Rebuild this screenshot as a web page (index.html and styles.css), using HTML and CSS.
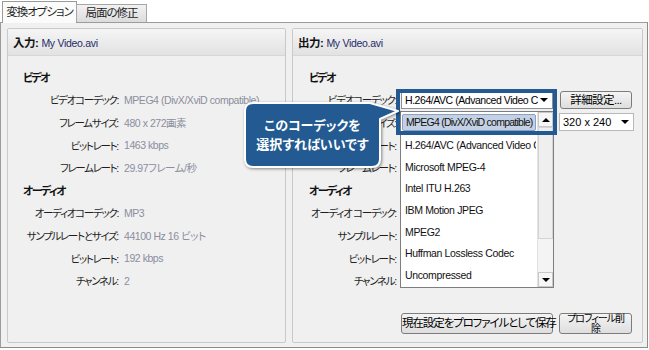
FILE: index.html
```html
<!DOCTYPE html>
<html lang="ja">
<head>
    <meta charset="UTF-8">
    <meta name="viewport" content="width=device-width, initial-scale=1.0">
    <title>変換オプション</title>
    <link rel="stylesheet" href="styles.css">
</head>
<body>
    <div class="tabs">
        <div class="tab active">変換オプション</div>
        <div class="tab">局面の修正</div>
    </div>
    <div class="frame">
        <div class="panel input">
            <div class="panel-head"><b>入力:</b> <span class="file">My Video.avi</span></div>
            <div class="panel-body info">
                <div class="group">ビデオ</div>
                <div class="label">ビデオコーデック:</div><div class="value">MPEG4 (DivX/XviD compatible)</div>
                <div class="label">フレームサイズ:</div><div class="value">480 x 272画素</div>
                <div class="label">ビットレート:</div><div class="value">1463 kbps</div>
                <div class="label">フレームレート:</div><div class="value">29.97フレーム/秒</div>
                <div class="group">オーディオ</div>
                <div class="label">オーディオコーデック:</div><div class="value">MP3</div>
                <div class="label">サンプルレートとサイズ:</div><div class="value">44100 Hz 16 ビット</div>
                <div class="label">ビットレート:</div><div class="value">192 kbps</div>
                <div class="label">チャンネル:</div><div class="value">2</div>
            </div>
        </div>
        <div class="panel output">
            <div class="panel-head"><b>出力:</b> <span class="file">My Video.avi</span></div>
            <div class="panel-body settings">
                <div class="group">ビデオ</div>
                <div class="label">ビデオコーデック:</div>
                <div class="controls">
                    <div class="select wide"><span class="select-text">H.264/AVC (Advanced Video C</span><span class="caret"></span></div>
                    <div class="button detail">詳細設定...</div>
                </div>
                <div class="label">フレームサイズ:</div>
                <div class="controls">
                    <div class="select wide"><span class="select-text">480 x 272</span><span class="caret"></span></div>
                    <div class="select size"><span class="select-text">320 x 240</span><span class="caret"></span></div>
                </div>
                <div class="label">ビットレート:</div><div class="controls"></div>
                <div class="label">フレームレート:</div><div class="controls"></div>
                <div class="group">オーディオ</div>
                <div class="label">オーディオ コーデック:</div><div class="controls"></div>
                <div class="label">サンプルレート:</div><div class="controls"></div>
                <div class="label">ビットレート:</div><div class="controls"></div>
                <div class="label">チャンネル:</div><div class="controls"></div>
            </div>
            <div class="actions">
                <div class="button save">現在設定をプロファイルとして保存</div>
                <div class="button remove">プロフィール削<br>除</div>
            </div>
        </div>

        <!-- open codec dropdown, drawn over the output panel -->
        <div class="codec-list">
            <div class="codec-items">
                <div class="codec current">MPEG4 (DivX/XviD compatible)</div>
                <div class="codec">H.264/AVC (Advanced Video C</div>
                <div class="codec">Microsoft MPEG-4</div>
                <div class="codec">Intel ITU H.263</div>
                <div class="codec">IBM Motion JPEG</div>
                <div class="codec">MPEG2</div>
                <div class="codec">Huffman Lossless Codec</div>
                <div class="codec">Uncompressed</div>
            </div>
            <div class="scrollbar">
                <div class="arrow"><span class="tri up"></span></div>
                <div class="thumb"></div>
                <div class="track"></div>
                <div class="arrow"><span class="tri down"></span></div>
            </div>
        </div>
        <div class="highlight"></div>
        <div class="callout">
            <svg class="bubble" width="162" height="72" viewBox="0 0 162 72">
                <path d="M13 3 H130 L158 11 L140 19 V59 Q140 67 132 67 H13 Q5 67 5 59 V11 Q5 3 13 3 Z" fill="#225a91" stroke="#fff" stroke-width="2" stroke-linejoin="round"/>
            </svg>
            <div class="callout-text">このコーデックを<br>選択すればいいです</div>
        </div>
    </div>
</body>
</html>
```

FILE: styles.css
```css
body {
    margin: 0;
    background: #fff;
    font-family: "Liberation Sans", "Noto Sans CJK JP", sans-serif;
    font-size: 11px;
    color: #1e1e1e;
    font-feature-settings: "palt";
}
.tabs {
    display: flex;
    align-items: flex-end;
    height: 23px;
    padding-left: 2px;
    margin-bottom: -1px;
    position: relative;
    z-index: 1;
}
.tab {
    box-sizing: border-box;
    width: 71px;
    height: 18px;
    line-height: 17px;
    margin-bottom: 1px;
    margin-left: -1px;
    border: 1px solid #a6a6a6;
    border-bottom: none;
    background: linear-gradient(#f2f2f2, #dcdcdc);
    text-align: center;
    font-size: 11.5px;
    letter-spacing: -1px;
}
.tab.active {
    width: 75px;
    height: 22px;
    line-height: 21px;
    margin: 0;
    border-color: #9a9a9a;
    background: #fbfbfb;
}
.frame {
    position: relative;
    display: flex;
    gap: 6px;
    width: 648px;
    height: 326px;
    box-sizing: border-box;
    padding: 5px 4px 4px 6px;
    border: 1px solid #9c9c9c;
    border-right-color: #8a8a8a;
    border-bottom-color: #8a8a8a;
    background: #f0f0f0;
}
.panel {
    display: flex;
    flex-direction: column;
    box-sizing: border-box;
    border: 1px solid #c9c9c9;
    border-radius: 2px;
    background: #f0f0f0;
}
.panel.input {
    width: 279px;
}
.panel.output {
    width: 351px;
}
.panel-head {
    height: 26px;
    line-height: 28px;
    padding-left: 5px;
    background: linear-gradient(#f5f5f5, #e2e2e2);
    border-bottom: 1px solid #d6d6d6;
}
.panel-head b {
    font-size: 11.5px;
    color: #111;
    letter-spacing: -0.5px;
}
.file {
    color: #1f2b68;
    font-size: 10.5px;
    letter-spacing: -0.3px;
}
.panel-body {
    display: grid;
    grid-auto-rows: 22.6px;
    align-items: center;
    padding-top: 10px;
}
.info {
    grid-template-columns: 110px 1fr;
    column-gap: 6px;
}
.settings {
    grid-template-columns: 103px 1fr;
    column-gap: 5px;
}
.group {
    grid-column: 1 / -1;
    padding-left: 15px;
    font-weight: bold;
    font-size: 11px;
    letter-spacing: -1.6px;
    color: #111;
}
.settings .group {
    padding-left: 16px;
}
.label {
    text-align: right;
    white-space: nowrap;
    font-size: 10.5px;
    letter-spacing: -1.3px;
}
.value {
    color: #8b8e9e;
    white-space: nowrap;
    font-size: 10.5px;
    letter-spacing: -0.45px;
}
.controls {
    display: flex;
    align-items: center;
}
.select {
    display: flex;
    align-items: center;
    box-sizing: border-box;
    height: 18px;
    padding: 0 4px 0 3px;
    border: 1px solid #8d8f96;
    background: #fff;
    font-size: 10.5px;
    letter-spacing: -0.45px;
    color: #000;
}
.select.wide {
    width: 152px;
}
.select.size {
    width: 75px;
    margin-left: 6px;
    border-color: #b8b8b8;
    font-size: 11px;
    letter-spacing: 0;
}
.select-text {
    flex: 1;
    white-space: nowrap;
    overflow: hidden;
}
.caret {
    width: 0;
    height: 0;
    margin-left: 2px;
    border-left: 4px solid transparent;
    border-right: 4px solid transparent;
    border-top: 4px solid #000;
}
.button {
    box-sizing: border-box;
    border: 1px solid #7c7c7c;
    border-radius: 3px;
    background: linear-gradient(#f4f4f4, #dedede);
    text-align: center;
    color: #000;
    white-space: nowrap;
}
.button.detail {
    width: 72px;
    height: 18px;
    line-height: 16px;
    margin-left: 7px;
    font-size: 11.5px;
    letter-spacing: -0.6px;
}
.actions {
    display: flex;
    justify-content: flex-end;
    gap: 6px;
    margin-top: auto;
    padding: 0 10px 8px 0;
}
.button.save {
    width: 152px;
    height: 21px;
    line-height: 19px;
    font-size: 11.5px;
    letter-spacing: -1.1px;
}
.button.remove {
    width: 73px;
    height: 21px;
    line-height: 10px;
    font-size: 10px;
    letter-spacing: -1px;
}
.codec-list {
    position: absolute;
    left: 399px;
    top: 88px;
    width: 154px;
    height: 177px;
    box-sizing: border-box;
    display: flex;
    border: 1px solid #7e7e7e;
    background: #fff;
}
.codec-items {
    flex: 1;
    min-width: 0;
    padding: 1px 1px 0;
    overflow: hidden;
}
.codec {
    height: 21.67px;
    line-height: 21.67px;
    padding-left: 3px;
    white-space: nowrap;
    overflow: hidden;
    color: #111;
    font-size: 10.5px;
    letter-spacing: -0.35px;
}
.codec.current {
    height: 15px;
    line-height: 15px;
    margin: 1px 0 4px;
    border: 1px solid #8aa0c0;
    border-radius: 2px;
    background: #c4d1e4;
    letter-spacing: -0.75px;
}
.scrollbar {
    display: flex;
    flex-direction: column;
    width: 15px;
    background: #f4f4f4;
    border-left: 1px solid #e2e2e2;
}
.arrow {
    display: flex;
    align-items: center;
    justify-content: center;
    height: 15px;
    box-sizing: border-box;
    border: 1px solid #c8c8c8;
    background: #f6f6f6;
}
.tri {
    width: 0;
    height: 0;
    border-left: 4px solid transparent;
    border-right: 4px solid transparent;
}
.tri.up {
    border-bottom: 4px solid #000;
}
.tri.down {
    border-top: 4px solid #000;
}
.thumb {
    height: 112px;
    box-sizing: border-box;
    border: 1px solid #d4d4d4;
    background: #efefef;
}
.track {
    flex: 1;
}
.highlight {
    position: absolute;
    left: 395px;
    top: 66px;
    width: 161px;
    height: 46px;
    box-sizing: border-box;
    border: 4px solid #235a91;
}
.callout {
    position: absolute;
    left: 239px;
    top: 77px;
    width: 162px;
    height: 72px;
}
.bubble {
    display: block;
    filter: drop-shadow(1px 1px 1.5px rgba(0, 0, 0, 0.45));
}
.callout-text {
    position: absolute;
    left: 5px;
    top: 3px;
    width: 135px;
    height: 64px;
    display: flex;
    align-items: center;
    justify-content: center;
    text-align: center;
    color: #fff;
    font-size: 13px;
    font-weight: bold;
    line-height: 19px;
}
```
